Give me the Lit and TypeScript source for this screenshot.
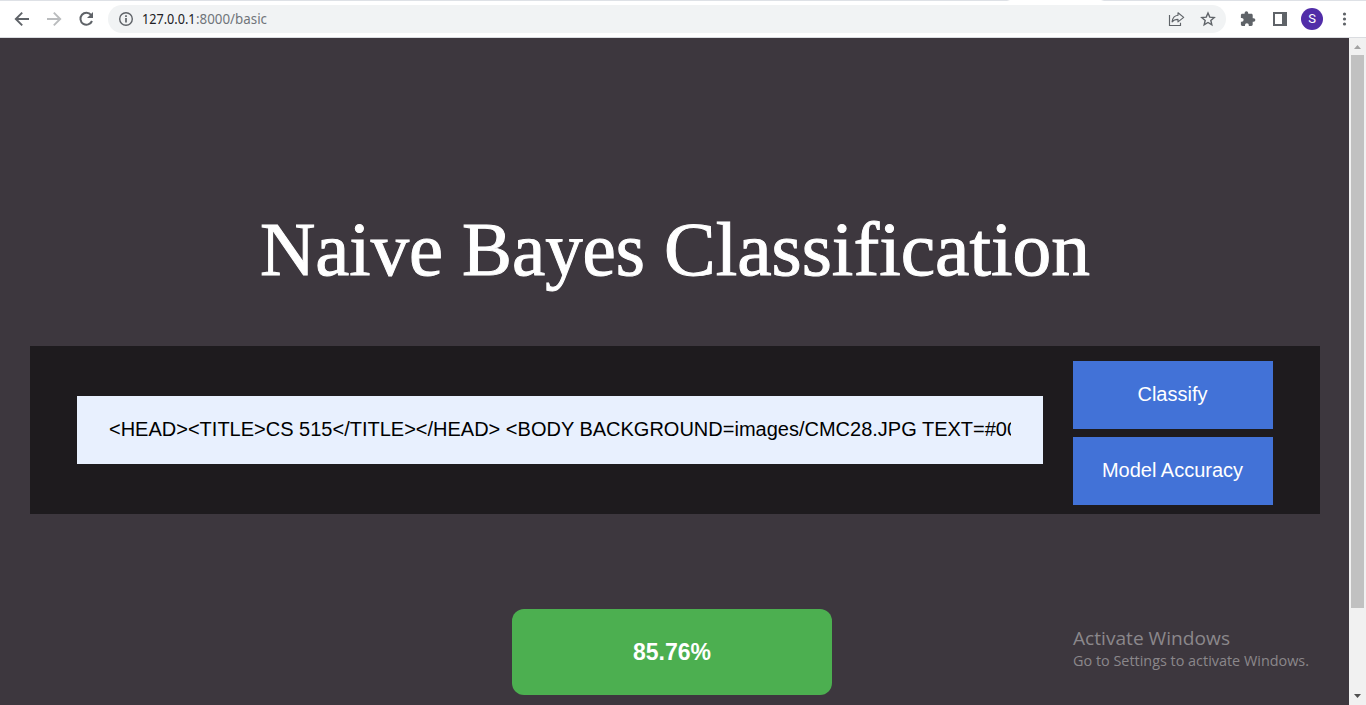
import { LitElement, html, css, svg } from "lit";
import { customElement, property } from "lit/decorators.js";

/** Single line of text set to an exact measure. */
@customElement("fit-text")
class FitText extends LitElement {
  @property() text = "";
  @property({ type: Number }) measure = 100;
  @property({ type: Number }) line = 20;
  @property({ type: Number }) baseline = 15;
  static styles = css`
    :host { display: block; }
    svg { display: block; overflow: visible; fill: currentColor; }
  `;
  render() {
    return html`<svg width=${this.measure} height=${this.line}>
      ${svg`<text x="0" y=${this.baseline} textLength=${this.measure} lengthAdjust="spacingAndGlyphs">${this.text}</text>`}
    </svg>`;
  }
}

@customElement("browser-bar")
class BrowserBar extends LitElement {
  static styles = css`
    :host {
      display: flex; align-items: center; box-sizing: border-box; height: 38px;
      padding: 0 12px 0 12px; color: #5f6368;
      border-bottom: 1px solid #dadce0;
      background: linear-gradient(90deg, #dee1e6 1007px, #fff 1010px, #fff 1101px, #dee1e6 1104px) 0 0 / 100% 1px no-repeat #fff;
      font-family: "Noto Sans", sans-serif;
    }
    svg { display: block; flex: none; }
    .nav { display: flex; gap: 12px; margin-right: 12px; }
    .omnibox {
      display: flex; align-items: center; box-sizing: border-box;
      width: 1118px; height: 28px; margin-top: 1px; padding: 0 8px 0 8px; border-radius: 14px; background: #f1f3f4;
    }
    .url { display: flex; flex: 1; margin-left: 6px; font-size: 14px; color: #70757a; }
    .host { color: #202124; }
    .page-actions { display: flex; gap: 12px; }
    .tools { display: flex; align-items: center; gap: 12px; margin-left: 12px; }
    .avatar {
      width: 22px; height: 22px; border-radius: 50%; background: #512da8; color: #fff;
      display: grid; place-items: center; font: 13px/22px Roboto, sans-serif; margin: 0 -1px;
    }
  `;
  render() {
    return html`
      <div class="nav">
        <svg width="20" height="20" viewBox="0 0 20 20" fill="none" stroke="#5f6368" stroke-width="1.9"><path d="M17 10H4M10.2 3.6 3.8 10l6.4 6.4"/></svg>
        <svg width="20" height="20" viewBox="0 0 20 20" fill="none" stroke="#babcbe" stroke-width="1.9"><path d="M3 10h13M9.8 3.6 16.2 10l-6.4 6.4"/></svg>
        <svg width="20" height="20" viewBox="0 0 20 20"><path d="M15.1 5.9A6 6 0 1 0 16 12" fill="none" stroke="#5f6368" stroke-width="2"/><path d="M17 3v6h-6z" fill="#5f6368"/></svg>
      </div>
      <div class="omnibox">
        <svg width="20" height="20" viewBox="0 0 20 20" fill="none" stroke="#5f6368"><circle cx="10" cy="10" r="6.3" stroke-width="1.4"/><path d="M10 9v4.4M10 6.3v1.6" stroke-width="1.7"/></svg>
        <div class="url">
          <fit-text class="host" text="127.0.0.1" measure="53.5" line="18" baseline="13.5"></fit-text>
          <fit-text text=":8000/basic" measure="71" line="18" baseline="13.5"></fit-text>
        </div>
        <div class="page-actions">
          <svg width="20" height="20" viewBox="0 0 20 20" fill="none" stroke="#5f6368" stroke-width="1.15"><path d="M3.5 6v10.500h11v-2.800"/><path d="M12 3.700 17.700 8.400l-5.700 4.500v-2.500c-2.900 0-4.700.8-5.900 2.400C6.500 9.200 8.300 6.700 12 6.300z" stroke-linejoin="round"/></svg>
          <svg width="20" height="20" viewBox="0 0 20 20" fill="none" stroke="#5f6368" stroke-width="1.4"><path d="m10 4 1.750 4.100 4.450.4-3.370 2.930 1 4.350L10 13.470l-3.830 2.310 1-4.350L3.800 8.500l4.450-.4z"/></svg>
        </div>
      </div>
      <div class="tools">
        <svg width="20" height="20" viewBox="0 0 20 20" fill="#5f6368"><path d="M15.600 9.300h-.9V6.200c0-.8-.6-1.400-1.400-1.400h-3.100V4a1.800 1.800 0 0 0-3.600 0v.8H4.300c-.8 0-1.400.6-1.400 1.400v2.700h.8a1.950 1.950 0 0 1 0 3.900h-.8v2.700c0 .8.600 1.400 1.400 1.400H7v-.8a1.900 1.900 0 0 1 3.800 0v.8h2.500c.8 0 1.400-.6 1.400-1.400v-2.700h.9a1.750 1.750 0 0 0 0-3.500z"/></svg>
        <svg width="20" height="20" viewBox="0 0 20 20"><path fill="#5f6368" fill-rule="evenodd" d="M3 3h14v14H3zM5 5v10h7V5z"/></svg>
        <div class="avatar">S</div>
        <svg width="20" height="20" viewBox="0 0 20 20" fill="#5f6368"><circle cx="10.500" cy="5" r="1.6"/><circle cx="10.500" cy="10" r="1.6"/><circle cx="10.500" cy="15" r="1.6"/></svg>
      </div>`;
  }
}

@customElement("page-scrollbar")
class PageScrollbar extends LitElement {
  static styles = css`
    :host { display: flex; flex-direction: column; align-items: center; flex: none; width: 17px; background: #f1f1f1; }
    svg { display: block; }
    .track { flex: 1; }
    .thumb { width: 13px; height: 553px; background: #c1c1c1; }
  `;
  render() {
    return html`
      <svg width="17" height="17"><path d="M5 11h7L8.500 7z" fill="#a3a3a3"/></svg>
      <div class="track"><div class="thumb"></div></div>
      <svg width="17" height="17"><path d="M5 6h7L8.500 10z" fill="#505050"/></svg>`;
  }
}

@customElement("app-root")
class AppRoot extends LitElement {
  static styles = css`
    :host { display: flex; flex-direction: column; position: relative; height: 705px; width: 1366px; overflow: hidden; background: #3d373e; font-family: "Liberation Sans", Arial, sans-serif; }
    .body { display: flex; flex: 1; min-height: 0; }
    main { flex: 1; display: flex; flex-direction: column; align-items: flex-start; padding: 172px 29px 0 30px; background: #3d373e; }
    h1 { display: flex; gap: 19px; margin: 0 0 0 230px; font: 400 76px "Liberation Serif", serif; color: #fff; height: 136px; }
    h1 fit-text { stroke: #fff; stroke-width: 1px; }
    .panel { display: flex; align-items: center; justify-content: space-between; box-sizing: border-box; width: 1290px; height: 168px; padding: 0 47px; background: #1e1b1e; }
    input { box-sizing: border-box; width: 966px; height: 68px; padding: 0 32px 2px; border: 0; border-radius: 0; outline: none; background: #e8f0fe; color: #000; font: 20px "Liberation Sans", Arial, sans-serif; }
    .buttons { display: flex; flex-direction: column; gap: 8px; padding-top: 6px; }
    button { width: 200px; height: 68px; padding: 0 1px 2px 0; border: 0; background: #4272d7; color: #fff; font: 20px "Liberation Sans", Arial, sans-serif; }
    .result { display: grid; place-items: center; width: 320px; height: 86px; margin: 95px 0 0 482px; border-radius: 12px; background: #4caf50; color: #fff; font-size: 23px; font-weight: 700; }
    .watermark { position: absolute; left: 1073px; top: 627px; color: #8b878b; font-family: "Open Sans", sans-serif; }
    .notice { font-size: 19px; }
    .hint { font-size: 14px; }
  `;
  render() {
    return html`
      <browser-bar></browser-bar>
      <div class="body">
        <main>
          <h1>
            <fit-text text="Naive" measure="183" line="100" baseline="65"></fit-text>
            <fit-text text="Bayes" measure="183" line="100" baseline="65"></fit-text>
            <fit-text text="Classification" measure="426" line="100" baseline="65"></fit-text>
          </h1>
          <div class="panel">
            <input .value=${"<HEAD><TITLE>CS 515</TITLE></HEAD> <BODY BACKGROUND=images/CMC28.JPG TEXT=#000000>"} />
            <div class="buttons"><button>Classify</button><button>Model Accuracy</button></div>
          </div>
          <div class="result">85.76%</div>
        </main>
        <page-scrollbar></page-scrollbar>
      </div>
      <div class="watermark">
        <fit-text class="notice" text="Activate Windows" measure="157" line="22" baseline="18"></fit-text>
        <fit-text class="hint" text="Go to Settings to activate Windows." measure="236" line="22" baseline="17"></fit-text>
      </div>`;
  }
}
